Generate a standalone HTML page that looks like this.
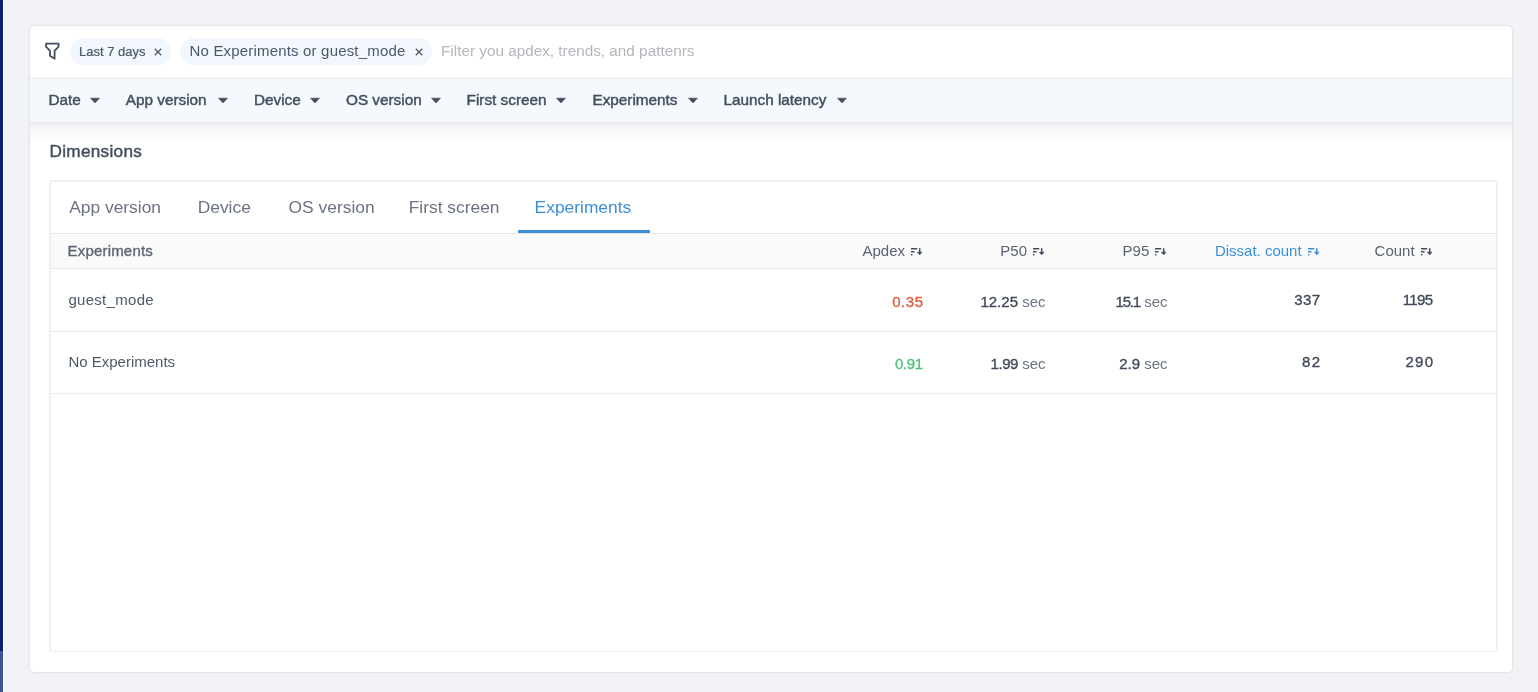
<!DOCTYPE html>
<html><head><meta charset="utf-8">
<style>
*{box-sizing:border-box;margin:0;padding:0}
html,body{width:1538px;height:692px;overflow:hidden;background:#f1f3f7;font-family:"Liberation Sans",sans-serif;color:#454e5f}
#root{position:absolute;left:0;top:0;width:1538px;height:692px;will-change:transform}
.abs{position:absolute;white-space:nowrap;line-height:1}
.x{position:absolute}
#strip{position:absolute;left:0;top:0;width:2.5px;height:651px;background:#0a2172}
#strip2{position:absolute;left:0;top:651px;width:2.5px;height:41px;background:#3a5590}
#strip3{position:absolute;left:2.5px;top:0;width:1.5px;height:692px;background:#f9fafd}
#card{position:absolute;left:29px;top:25px;width:1484px;height:648px;background:#fff;border:1px solid #e3e5ea;border-radius:5px;box-shadow:0 0 3px rgba(0,0,0,.035)}
#fbar{position:absolute;left:30px;top:78px;width:1482px;height:45px;background:#f4f9fd;border-top:1px solid #e8ecf1;border-bottom:1px solid #e6eaf0}
#fshadow{position:absolute;left:30px;top:123px;width:1482px;height:17px;background:linear-gradient(rgba(20,20,50,.08),rgba(20,20,50,.045) 30%,rgba(20,20,50,0))}
.chip{position:absolute;top:38px;height:27px;border-radius:14px;background:#f1f7fd}
.ctext{font-size:15px;color:#4f5768}
.dd{font-size:15.3px;color:#454e5f;-webkit-text-stroke:0.45px #454e5f;top:91.7px}
.caret{position:absolute;top:98px;width:0;height:0;border-left:4.7px solid transparent;border-right:4.7px solid transparent;border-top:5.3px solid #454e5f}
#dim{left:49.5px;top:143px;letter-spacing:.28px;font-size:17.2px;color:#454e5f;-webkit-text-stroke:0.45px #454e5f}
#tbl{position:absolute;left:49px;top:180px;width:1449px;height:472px;border:2px solid #edeff4;border-bottom-width:1px;border-radius:3px;background:#fff}
.tab{font-size:17.4px;color:#6b7382;top:199px}
#uline{position:absolute;left:518px;top:230px;width:132px;height:3px;background:#3b8fd9}
#thead{position:absolute;left:51px;top:232.6px;width:1445px;height:36.6px;background:#fafafb;border-top:1.5px solid #e5e7ec;border-bottom:1.5px solid #e5e7ec}
.th{font-size:15px;color:#5b6372;top:243.2px}
.rowline{position:absolute;left:51px;width:1445px;height:1.5px;background:#e9ecf2}
.td{font-size:15px;color:#4f5869}
.num{font-size:15px;color:#414a5a;-webkit-text-stroke:0.35px #414a5a}
.sec{font-size:15px;color:#6b7382;-webkit-text-stroke:0}
</style></head><body><div id="root">
<div id="strip"></div><div id="strip2"></div><div id="strip3"></div>
<div id="card"></div>
<svg class="x" style="left:44px;top:42px" width="17" height="19" viewBox="0 0 17 19"><path d="M2.07 1.55 H14.56 V4.7 L10.6 8.8 V16.8 L6 13.7 V8.8 L2.07 4.7 Z" fill="none" stroke="#454e5f" stroke-width="1.8" stroke-linejoin="round"/></svg>
<div class="chip" style="left:70px;width:101px"></div>
<div class="abs ctext" style="left:79px;top:45px;font-size:13px;-webkit-text-stroke:0.2px #4f5768">Last 7 days</div>
<svg class="x" style="left:153.7px;top:47.5px" width="8" height="8" viewBox="0 0 8 8"><path d="M0.8 0.8 L7.2 7.2 M7.2 0.8 L0.8 7.2" stroke="#515a6a" stroke-width="1.3"/></svg>
<div class="chip" style="left:180px;width:252px"></div>
<div class="abs ctext" style="left:189.5px;top:42.8px;letter-spacing:.18px">No Experiments or guest_mode</div>
<svg class="x" style="left:415px;top:47.5px" width="8" height="8" viewBox="0 0 8 8"><path d="M0.8 0.8 L7.2 7.2 M7.2 0.8 L0.8 7.2" stroke="#515a6a" stroke-width="1.3"/></svg>
<div class="abs ctext" style="left:441px;top:42.5px;color:#b3b6bc;font-size:15.3px">Filter you apdex, trends, and pattenrs</div>
<div id="fbar"></div><div id="fshadow"></div>
<div class="abs dd" style="left:48.5px">Date</div><svg class="x" style="left:88.9px;top:96px" width="12" height="8" viewBox="0 0 12 8"><path d="M1.6 2.2H10.4L6 6.9Z" fill="#454e5f" stroke="#454e5f" stroke-width="0.7" stroke-linejoin="round"/></svg>
<div class="abs dd" style="left:125.8px">App version</div><svg class="x" style="left:216.6px;top:96px" width="12" height="8" viewBox="0 0 12 8"><path d="M1.6 2.2H10.4L6 6.9Z" fill="#454e5f" stroke="#454e5f" stroke-width="0.7" stroke-linejoin="round"/></svg>
<div class="abs dd" style="left:254px">Device</div><svg class="x" style="left:308.9px;top:96px" width="12" height="8" viewBox="0 0 12 8"><path d="M1.6 2.2H10.4L6 6.9Z" fill="#454e5f" stroke="#454e5f" stroke-width="0.7" stroke-linejoin="round"/></svg>
<div class="abs dd" style="left:346px">OS version</div><svg class="x" style="left:429.8px;top:96px" width="12" height="8" viewBox="0 0 12 8"><path d="M1.6 2.2H10.4L6 6.9Z" fill="#454e5f" stroke="#454e5f" stroke-width="0.7" stroke-linejoin="round"/></svg>
<div class="abs dd" style="left:466.6px">First screen</div><svg class="x" style="left:555.1px;top:96px" width="12" height="8" viewBox="0 0 12 8"><path d="M1.6 2.2H10.4L6 6.9Z" fill="#454e5f" stroke="#454e5f" stroke-width="0.7" stroke-linejoin="round"/></svg>
<div class="abs dd" style="left:592.5px">Experiments</div><svg class="x" style="left:686.8px;top:96px" width="12" height="8" viewBox="0 0 12 8"><path d="M1.6 2.2H10.4L6 6.9Z" fill="#454e5f" stroke="#454e5f" stroke-width="0.7" stroke-linejoin="round"/></svg>
<div class="abs dd" style="left:723.5px">Launch latency</div><svg class="x" style="left:836.3px;top:96px" width="12" height="8" viewBox="0 0 12 8"><path d="M1.6 2.2H10.4L6 6.9Z" fill="#454e5f" stroke="#454e5f" stroke-width="0.7" stroke-linejoin="round"/></svg>
<div class="abs" id="dim">Dimensions</div>
<div id="tbl"></div>
<div class="abs tab" style="left:69.2px">App version</div>
<div class="abs tab" style="left:197.7px">Device</div>
<div class="abs tab" style="left:288.6px">OS version</div>
<div class="abs tab" style="left:408.7px">First screen</div>
<div class="abs tab" style="left:534.6px;color:#3b8fd9">Experiments</div>
<div id="thead"></div><div id="uline"></div>
<div class="abs th" style="left:67.6px;top:243px;letter-spacing:.18px;font-size:15px;color:#5d6575;-webkit-text-stroke:0.35px #5d6575">Experiments</div>
<div class="abs th" style="right:633px;">Apdex</div>
<div class="abs th" style="right:511px;">P50</div>
<div class="abs th" style="right:388.70000000000005px;">P95</div>
<div class="abs th" style="right:236.4000000000001px;color:#3b8fd9">Dissat. count</div>
<div class="abs th" style="right:123.40000000000009px;">Count</div>
<div class="x" style="left:910.8px;top:247.5px"><svg width="12" height="8" viewBox="0 0 12 8" style="display:block"><path d="M0 0.7H6.2M0 3.8H3.5M0 6.7H1.4" stroke="#454e5f" stroke-width="1.4"/><path d="M8.7 0.2V5" stroke="#454e5f" stroke-width="1.5"/><path d="M6.45 4.2H10.95L8.7 6.8Z" fill="#454e5f" stroke="#454e5f" stroke-width="0.8" stroke-linejoin="round"/></svg></div>
<div class="x" style="left:1033px;top:247.5px"><svg width="12" height="8" viewBox="0 0 12 8" style="display:block"><path d="M0 0.7H6.2M0 3.8H3.5M0 6.7H1.4" stroke="#454e5f" stroke-width="1.4"/><path d="M8.7 0.2V5" stroke="#454e5f" stroke-width="1.5"/><path d="M6.45 4.2H10.95L8.7 6.8Z" fill="#454e5f" stroke="#454e5f" stroke-width="0.8" stroke-linejoin="round"/></svg></div>
<div class="x" style="left:1155.3px;top:247.5px"><svg width="12" height="8" viewBox="0 0 12 8" style="display:block"><path d="M0 0.7H6.2M0 3.8H3.5M0 6.7H1.4" stroke="#454e5f" stroke-width="1.4"/><path d="M8.7 0.2V5" stroke="#454e5f" stroke-width="1.5"/><path d="M6.45 4.2H10.95L8.7 6.8Z" fill="#454e5f" stroke="#454e5f" stroke-width="0.8" stroke-linejoin="round"/></svg></div>
<div class="x" style="left:1307.6px;top:247.5px"><svg width="12" height="8" viewBox="0 0 12 8" style="display:block"><path d="M0 0.7H6.2M0 3.8H3.5M0 6.7H1.4" stroke="#3b8fd9" stroke-width="1.4"/><path d="M8.7 0.2V5" stroke="#3b8fd9" stroke-width="1.5"/><path d="M6.45 4.2H10.95L8.7 6.8Z" fill="#3b8fd9" stroke="#3b8fd9" stroke-width="0.8" stroke-linejoin="round"/></svg></div>
<div class="x" style="left:1420.6px;top:247.5px"><svg width="12" height="8" viewBox="0 0 12 8" style="display:block"><path d="M0 0.7H6.2M0 3.8H3.5M0 6.7H1.4" stroke="#454e5f" stroke-width="1.4"/><path d="M8.7 0.2V5" stroke="#454e5f" stroke-width="1.5"/><path d="M6.45 4.2H10.95L8.7 6.8Z" fill="#454e5f" stroke="#454e5f" stroke-width="0.8" stroke-linejoin="round"/></svg></div>
<div class="rowline" style="top:330.5px"></div><div class="rowline" style="top:392.5px"></div>
<div class="abs td" style="left:68.4px;top:292px;letter-spacing:.3px">guest_mode</div>
<div class="abs td" style="left:68.4px;top:354.2px">No Experiments</div>
<div class="abs num" style="right:615px;top:294px;color:#e35b3c;-webkit-text-stroke-color:#e35b3c;margin-right:-.55px"><span style="letter-spacing:.55px">0.35</span></div>
<div class="abs num" style="right:615px;top:356.2px;color:#52c07c;-webkit-text-stroke-color:#52c07c;margin-right:.4px"><span style="letter-spacing:-.4px">0.91</span></div>
<div class="abs num" style="right:492.5px;top:294px;">12.25 <span class="sec">sec</span></div>
<div class="abs num" style="right:492.5px;top:356.2px;"><span style="letter-spacing:-.45px">1.99</span> <span class="sec">sec</span></div>
<div class="abs num" style="right:370.5px;top:294px;"><span style="letter-spacing:-1.2px">15.1</span> <span class="sec">sec</span></div>
<div class="abs num" style="right:370.5px;top:356.2px;">2.9 <span class="sec">sec</span></div>
<div class="abs num" style="right:218px;top:292px;margin-right:-.3px"><span style="letter-spacing:.3px">337</span></div>
<div class="abs num" style="right:218px;top:354.2px;margin-right:-1.4px"><span style="letter-spacing:1.4px">82</span></div>
<div class="abs num" style="right:105px;top:292px;margin-right:.7px"><span style="letter-spacing:-.7px">1195</span></div>
<div class="abs num" style="right:105px;top:354.2px;margin-right:-1.2px"><span style="letter-spacing:1.2px">290</span></div>
</div></body></html>
